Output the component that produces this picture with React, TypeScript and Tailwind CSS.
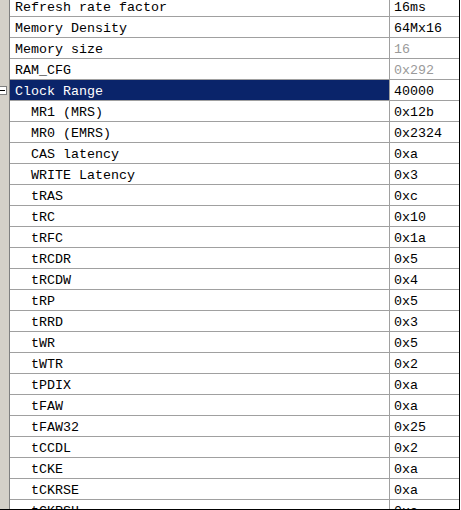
import React from 'react';

type Row = {
  name: string;
  value: string;
  level?: number;
  disabled?: boolean;
  selected?: boolean;
  expander?: boolean;
};

const rows: Row[] = [
  { name: 'Refresh rate factor', value: '16ms' },
  { name: 'Memory Density', value: '64Mx16' },
  { name: 'Memory size', value: '16', disabled: true },
  { name: 'RAM_CFG', value: '0x292', disabled: true },
  { name: 'Clock Range', value: '40000', selected: true, expander: true },
  { name: 'MR1 (MRS)', value: '0x12b', level: 1 },
  { name: 'MR0 (EMRS)', value: '0x2324', level: 1 },
  { name: 'CAS latency', value: '0xa', level: 1 },
  { name: 'WRITE Latency', value: '0x3', level: 1 },
  { name: 'tRAS', value: '0xc', level: 1 },
  { name: 'tRC', value: '0x10', level: 1 },
  { name: 'tRFC', value: '0x1a', level: 1 },
  { name: 'tRCDR', value: '0x5', level: 1 },
  { name: 'tRCDW', value: '0x4', level: 1 },
  { name: 'tRP', value: '0x5', level: 1 },
  { name: 'tRRD', value: '0x3', level: 1 },
  { name: 'tWR', value: '0x5', level: 1 },
  { name: 'tWTR', value: '0x2', level: 1 },
  { name: 'tPDIX', value: '0xa', level: 1 },
  { name: 'tFAW', value: '0xa', level: 1 },
  { name: 'tFAW32', value: '0x25', level: 1 },
  { name: 'tCCDL', value: '0x2', level: 1 },
  { name: 'tCKE', value: '0xa', level: 1 },
  { name: 'tCKRSE', value: '0xa', level: 1 },
  { name: 'tCKRSH', value: '0xa', level: 1 },
];

export default function App() {
  return (
    <div className="w-[461px] h-[510px] bg-white overflow-hidden">
      <div
        className="w-[460px] h-[510px] border-r border-b border-black overflow-hidden text-[13.33px] text-black"
        style={{ fontFamily: '"Liberation Mono", "Courier New", monospace' }}
      >
        <div className="flex flex-col -mt-[4px]">
          {rows.map((row) => (
            <div key={row.name} className="flex h-[21px] shrink-0">
              {/* Tree gutter */}
              <div className="relative w-[9px] shrink-0 bg-[#d4d0c8] border-r border-[#808080] box-content">
                {row.expander && (
                  <div className="absolute left-[-2px] top-[6px] w-[9px] h-[9px] bg-white border border-[#808080] flex items-center justify-center">
                    <div className="w-[5px] h-px bg-black" />
                  </div>
                )}
              </div>

              {/* Name */}
              <div
                className={`w-[379px] shrink-0 border-b border-[#a0a0a0] pt-[3px] leading-[17px] whitespace-nowrap overflow-hidden ${
                  row.selected ? 'bg-[#0a246a] text-white' : ''
                } ${row.level ? 'pl-[21px]' : 'pl-[5px]'}`}
              >
                {row.name}
              </div>

              {/* Value */}
              <div
                className={`flex-1 border-l border-b border-[#a0a0a0] pl-[4px] pt-[3px] leading-[17px] whitespace-nowrap overflow-hidden ${
                  row.disabled ? 'text-[#9a9a9a]' : ''
                }`}
              >
                {row.value}
              </div>
            </div>
          ))}
        </div>
      </div>
    </div>
  );
}
